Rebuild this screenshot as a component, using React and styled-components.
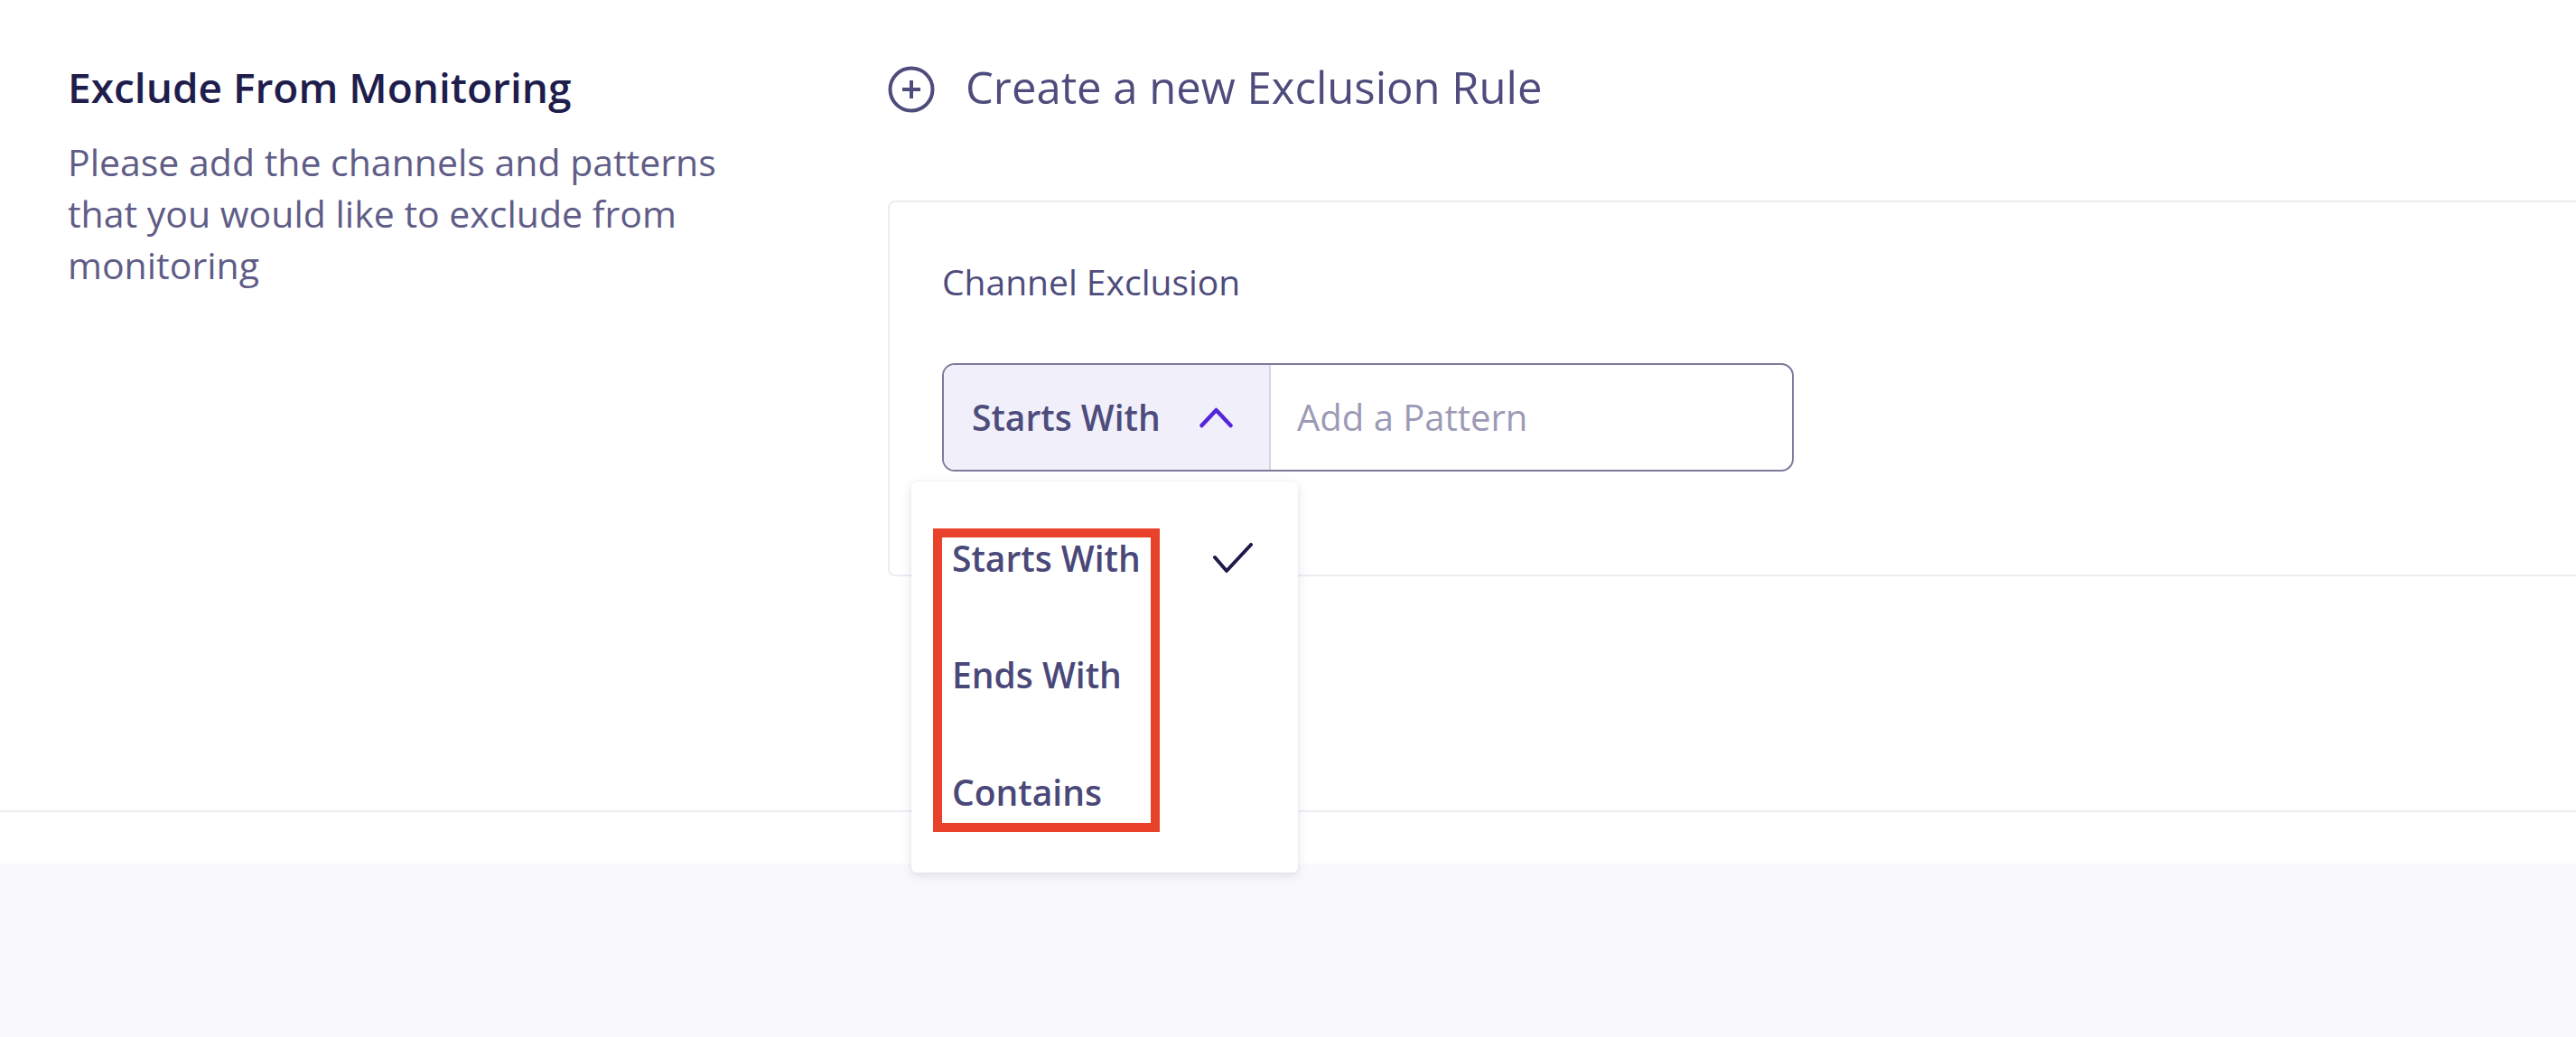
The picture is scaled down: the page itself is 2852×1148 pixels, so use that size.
import { createGlobalStyle } from "styled-components";
import styled from "styled-components";

const GlobalStyle = createGlobalStyle`
  html, body {
    margin: 0;
    padding: 0;
    background: #ffffff;
    font-family: "Open Sans", "Liberation Sans", sans-serif;
  }
  * { box-sizing: border-box; }
`;

const Page = styled.div`
  min-height: 100vh;
  display: flex;
  flex-direction: column;
  background: #ffffff;
`;

const Main = styled.div`
  display: grid;
  grid-template-columns: 983px 1fr;
  padding: 67px 0 259px 0;
`;

const Intro = styled.div`
  padding-left: 75px;
  padding-top: 2px;
`;

const Title = styled.h2`
  margin: 0;
  font-size: 46px;
  line-height: 1.2;
  font-weight: 600;
  color: #201d4d;
`;

const Description = styled.p`
  margin: 27px 0 0 0;
  max-width: 748px;
  font-size: 41px;
  line-height: 57px;
  font-weight: 400;
  color: #5f5d87;
`;

const Rules = styled.div`
  display: flex;
  flex-direction: column;
  min-width: 0;
`;

const CreateButton = styled.button`
  display: flex;
  align-items: center;
  gap: 34px;
  padding: 0;
  border: none;
  background: none;
  font-family: inherit;
  font-size: 49px;
  line-height: 1.2;
  font-weight: 400;
  color: #4e4c7c;
  cursor: pointer;
  align-self: flex-start;
  svg {
    margin-top: 6px;
  }
`;

const Card = styled.div`
  margin-top: 96px;
  border: 2px solid #ececf3;
  border-right: none;
  border-radius: 8px 0 0 8px;
  padding: 65px 0 114px 58px;
`;

const Label = styled.div`
  font-size: 39px;
  line-height: 1.2;
  font-weight: 400;
  color: #4e4c7c;
`;

const InputGroup = styled.div`
  position: relative;
  margin-top: 66px;
  width: 943px;
  height: 120px;
  display: flex;
  border: 2px solid #7d7b9b;
  border-radius: 14px;
`;

const SelectBox = styled.div`
  width: 362px;
  display: flex;
  align-items: center;
  justify-content: space-between;
  padding: 0 40px 0 31px;
  background: #f1f0fa;
  border-right: 2px solid #d6d5e4;
  border-radius: 12px 0 0 12px;
  font-size: 39px;
  font-weight: 600;
  color: #4e4c7c;
`;

const PatternInput = styled.input`
  flex: 1;
  min-width: 0;
  border: none;
  outline: none;
  background: transparent;
  padding: 0 0 0 29px;
  font-family: inherit;
  font-size: 40px;
  color: #4e4c7c;
  border-radius: 0 12px 12px 0;
  &::placeholder {
    color: #9c9ab6;
  }
`;

const Menu = styled.div`
  position: absolute;
  top: calc(100% + 13px);
  left: -36px;
  width: 428px;
  height: 433px;
  padding: 62px 50px 0 45px;
  background: #ffffff;
  border-radius: 6px;
  box-shadow: 0 4px 12px rgba(40, 38, 90, 0.12), 0 0 2px rgba(40, 38, 90, 0.08);
  display: flex;
  flex-direction: column;
  gap: 83px;
  z-index: 2;
`;

const MenuItem = styled.div`
  display: flex;
  align-items: center;
  justify-content: space-between;
  font-size: 39px;
  line-height: 1.2;
  font-weight: 600;
  color: #4a4878;
`;

const Highlight = styled.div`
  position: absolute;
  left: 24px;
  top: 52px;
  width: 251px;
  height: 336px;
  border: 10px solid #e8432a;
  pointer-events: none;
`;

const Rule = styled.div`
  height: 2px;
  background: #ececf3;
`;

const Gap = styled.div`
  height: 57px;
  background: #ffffff;
`;

const Footer = styled.div`
  flex: 1;
  background: #f9f9fd;
`;

const PlusCircle = () => (
  <svg width="52" height="52" viewBox="0 0 52 52" fill="none">
    <circle cx="26" cy="26" r="23.5" stroke="#4e4c7c" strokeWidth="4" />
    <path d="M26 16v20M16 26h20" stroke="#4e4c7c" strokeWidth="4" />
  </svg>
);

const ChevronUp = () => (
  <svg width="37" height="24" viewBox="0 0 37 24" fill="none">
    <path d="M2.5 21L18.5 4L34.5 21" stroke="#5426d8" strokeWidth="4.5" strokeLinecap="round" strokeLinejoin="round" />
  </svg>
);

const Check = () => (
  <svg width="44" height="34" viewBox="0 0 44 34" fill="none">
    <path d="M2 16L15 31L42 2" stroke="#1e1b4b" strokeWidth="4" strokeLinecap="round" strokeLinejoin="round" />
  </svg>
);

const options = ["Starts With", "Ends With", "Contains"];

export default function App() {
  const selected = "Starts With";
  return (
    <Page>
      <GlobalStyle />
      <Main>
        <Intro>
          <Title>Exclude From Monitoring</Title>
          <Description>
            Please add the channels and patterns that you would like to exclude
            from monitoring
          </Description>
        </Intro>
        <Rules>
          <CreateButton>
            <PlusCircle />
            Create a new Exclusion Rule
          </CreateButton>
          <Card>
            <Label>Channel Exclusion</Label>
            <InputGroup>
              <SelectBox>
                <span>{selected}</span>
                <ChevronUp />
              </SelectBox>
              <PatternInput placeholder="Add a Pattern" />
              <Menu>
                <Highlight />
                {options.map((opt) => (
                  <MenuItem key={opt}>
                    <span>{opt}</span>
                    {opt === selected && <Check />}
                  </MenuItem>
                ))}
              </Menu>
            </InputGroup>
          </Card>
        </Rules>
      </Main>
      <Rule />
      <Gap />
      <Footer />
    </Page>
  );
}
